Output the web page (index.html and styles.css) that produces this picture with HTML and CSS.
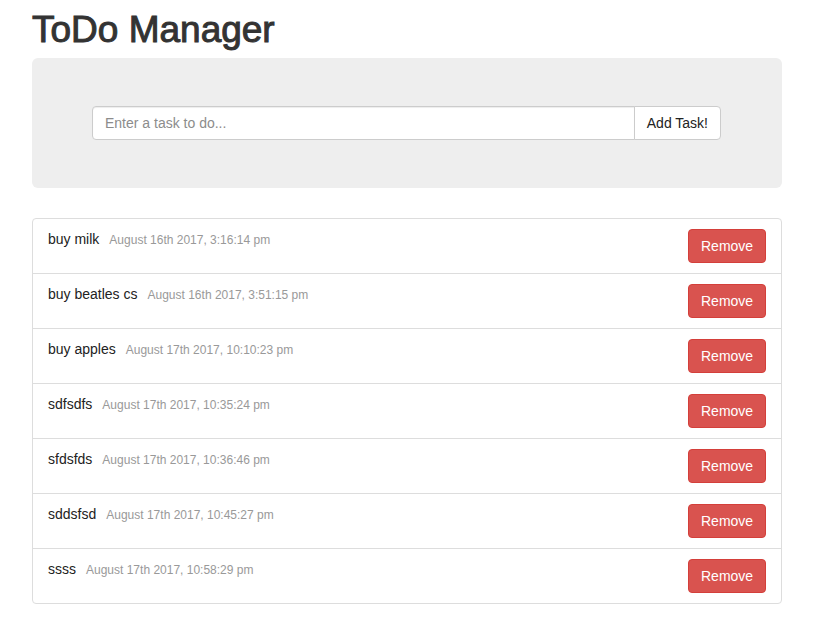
FILE: index.html
```html
<!DOCTYPE html>
<html lang="en">
<head>
<meta charset="utf-8">
<title>ToDo Manager</title>
<link rel="stylesheet" href="styles.css">
</head>
<body>
<main class="container">
<h1>ToDo Manager</h1>
<form class="jumbotron">
<div class="input-group">
<input class="task-input" type="text" placeholder="Enter a task to do..." aria-label="Task">
<button class="btn add" type="button">Add Task!</button>
</div>
</form>
<ul class="tasks">
<li><span>buy milk</span><time>August 16th 2017, 3:16:14 pm</time><button class="btn remove" type="button">Remove</button></li>
<li><span>buy beatles cs</span><time>August 16th 2017, 3:51:15 pm</time><button class="btn remove" type="button">Remove</button></li>
<li><span>buy apples</span><time>August 17th 2017, 10:10:23 pm</time><button class="btn remove" type="button">Remove</button></li>
<li><span>sdfsdfs</span><time>August 17th 2017, 10:35:24 pm</time><button class="btn remove" type="button">Remove</button></li>
<li><span>sfdsfds</span><time>August 17th 2017, 10:36:46 pm</time><button class="btn remove" type="button">Remove</button></li>
<li><span>sddsfsd</span><time>August 17th 2017, 10:45:27 pm</time><button class="btn remove" type="button">Remove</button></li>
<li><span>ssss</span><time>August 17th 2017, 10:58:29 pm</time><button class="btn remove" type="button">Remove</button></li>
</ul>
</main>
</body>
</html>
```
FILE: styles.css
```css
* { box-sizing: border-box; }
body {
  margin: 0;
  background: #fff;
  color: #222;
  font: 14px/20px "Liberation Sans", Arial, sans-serif;
}
.container {
  padding: 10px 33px 10px 32px;
}
h1 {
  margin: 0 0 8px;
  color: #333;
  font-size: 37px;
  line-height: 40px;
  font-weight: 500;
  -webkit-text-stroke: 1px #333;
}
.jumbotron {
  margin: 0 0 30px;
  padding: 48px 61px 48px 60px;
  border-radius: 6px;
  background: #eee;
}
.input-group { display: flex; }
.btn {
  padding: 6px 12px;
  border: 1px solid #ccc;
  border-radius: 4px;
  background: #fff;
  color: #222;
  font: inherit;
  cursor: pointer;
}
.task-input {
  flex: 1;
  min-width: 0;
  height: 34px;
  padding: 6px 12px;
  border: 1px solid #ccc;
  border-radius: 4px 0 0 4px;
  box-shadow: inset 0 1px 1px rgba(0, 0, 0, .075);
  color: #555;
  font: inherit;
}
.task-input::placeholder { color: #8c8c8c; opacity: 1; }
.add {
  margin-left: -1px;
  border-radius: 0 4px 4px 0;
}
.tasks {
  margin: 0;
  padding: 0;
  list-style: none;
  border: 1px solid #ddd;
  border-radius: 4px;
}
.tasks li {
  display: flex;
  align-items: flex-start;
  gap: 10px;
  padding: 10px 15px;
}
.tasks li + li { border-top: 1px solid #ddd; }
time { color: #999; font-size: 12px; line-height: 22px; }
.remove {
  width: 78px;
  margin-left: auto;
  border-color: #d43f3a;
  background: #d9534f;
  color: #fff;
}
```
